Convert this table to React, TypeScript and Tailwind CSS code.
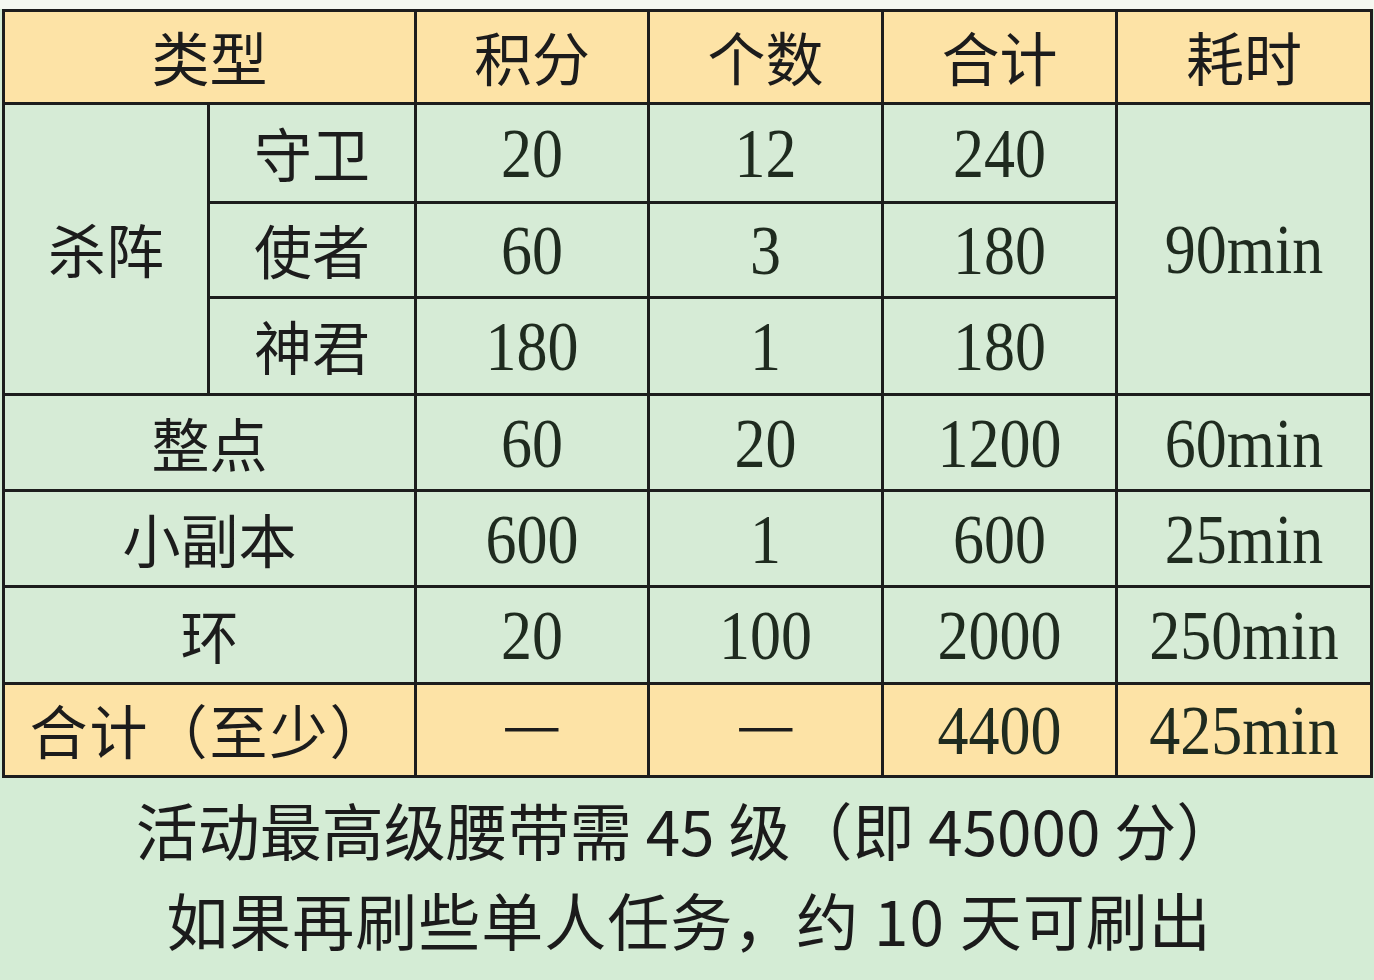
import React from "react";

const cjk = { fontFamily: '"Noto Sans CJK SC", "Noto Sans", sans-serif' };
const serif = { fontFamily: '"Liberation Serif", "Noto Sans CJK SC", serif' };

const td = "border-[3px] border-[#1d1d1d] text-center align-middle p-0";
const green = "bg-[#d6ebd6]";
const orange = "bg-[#fde3a6]";

function Num({ children }: { children: React.ReactNode }) {
  return (
    <span className="inline-block scale-y-[1.12] text-[62px] leading-none text-[#1f2b1f]" style={serif}>
      {children}
    </span>
  );
}

function Zh({ children }: { children: React.ReactNode }) {
  return (
    <span className="inline-block text-[58px] leading-none text-[#1c1c1c]" style={cjk}>
      {children}
    </span>
  );
}

function Dash() {
  return (
    <span className="inline-block text-[58px] leading-none text-[#1c1c1c] -translate-y-[8px] scale-x-[1.15]" style={cjk}>
      —
    </span>
  );
}

export default function App() {
  return (
    <div className="min-h-[980px] w-[1374px] bg-[#d4ecd5] overflow-hidden">
      <div className="h-[9px] bg-[#f5f8f1]" />
      <table className="table-fixed border-collapse w-[1368px] ml-[2px]">
        <colgroup>
          <col className="w-[205px]" />
          <col className="w-[207px]" />
          <col className="w-[233px]" />
          <col className="w-[234px]" />
          <col className="w-[234px]" />
          <col className="w-[255px]" />
        </colgroup>
        <tbody>
          <tr className="h-[93px]">
            <td colSpan={2} className={`${td} ${orange}`}><Zh>类型</Zh></td>
            <td className={`${td} ${orange}`}><Zh>积分</Zh></td>
            <td className={`${td} ${orange}`}><Zh>个数</Zh></td>
            <td className={`${td} ${orange}`}><Zh>合计</Zh></td>
            <td className={`${td} ${orange}`}><Zh>耗时</Zh></td>
          </tr>
          <tr className="h-[99px]">
            <td rowSpan={3} className={`${td} ${green}`}><Zh>杀阵</Zh></td>
            <td className={`${td} ${green}`}><Zh>守卫</Zh></td>
            <td className={`${td} ${green}`}><Num>20</Num></td>
            <td className={`${td} ${green}`}><Num>12</Num></td>
            <td className={`${td} ${green}`}><Num>240</Num></td>
            <td rowSpan={3} className={`${td} ${green}`}><Num>90min</Num></td>
          </tr>
          <tr className="h-[95px]">
            <td className={`${td} ${green}`}><Zh>使者</Zh></td>
            <td className={`${td} ${green}`}><Num>60</Num></td>
            <td className={`${td} ${green}`}><Num>3</Num></td>
            <td className={`${td} ${green}`}><Num>180</Num></td>
          </tr>
          <tr className="h-[97px]">
            <td className={`${td} ${green}`}><Zh>神君</Zh></td>
            <td className={`${td} ${green}`}><Num>180</Num></td>
            <td className={`${td} ${green}`}><Num>1</Num></td>
            <td className={`${td} ${green}`}><Num>180</Num></td>
          </tr>
          <tr className="h-[96px]">
            <td colSpan={2} className={`${td} ${green}`}><Zh>整点</Zh></td>
            <td className={`${td} ${green}`}><Num>60</Num></td>
            <td className={`${td} ${green}`}><Num>20</Num></td>
            <td className={`${td} ${green}`}><Num>1200</Num></td>
            <td className={`${td} ${green}`}><Num>60min</Num></td>
          </tr>
          <tr className="h-[96px]">
            <td colSpan={2} className={`${td} ${green}`}><Zh>小副本</Zh></td>
            <td className={`${td} ${green}`}><Num>600</Num></td>
            <td className={`${td} ${green}`}><Num>1</Num></td>
            <td className={`${td} ${green}`}><Num>600</Num></td>
            <td className={`${td} ${green}`}><Num>25min</Num></td>
          </tr>
          <tr className="h-[97px]">
            <td colSpan={2} className={`${td} ${green}`}><Zh>环</Zh></td>
            <td className={`${td} ${green}`}><Num>20</Num></td>
            <td className={`${td} ${green}`}><Num>100</Num></td>
            <td className={`${td} ${green}`}><Num>2000</Num></td>
            <td className={`${td} ${green}`}><Num>250min</Num></td>
          </tr>
          <tr className="h-[93px]">
            <td colSpan={2} className={`${td} ${orange}`}>
              <span className="inline-block text-[58px] leading-none text-[#1c1c1c] tracking-[2px]" style={cjk}>合计（至少）</span>
            </td>
            <td className={`${td} ${orange}`}><Dash /></td>
            <td className={`${td} ${orange}`}><Dash /></td>
            <td className={`${td} ${orange}`}><Num>4400</Num></td>
            <td className={`${td} ${orange}`}><Num>425min</Num></td>
          </tr>
        </tbody>
      </table>
      <div className="pt-[6px] flex flex-col items-center text-[62px] leading-[90px] text-[#1b1b1b]" style={cjk}>
        <div className="whitespace-nowrap">活动最高级腰带需 45 级（即 45000 分）</div>
        <div className="pl-[4px] tracking-[1px] whitespace-nowrap">如果再刷些单人任务，约 10 天可刷出</div>
      </div>
    </div>
  );
}
